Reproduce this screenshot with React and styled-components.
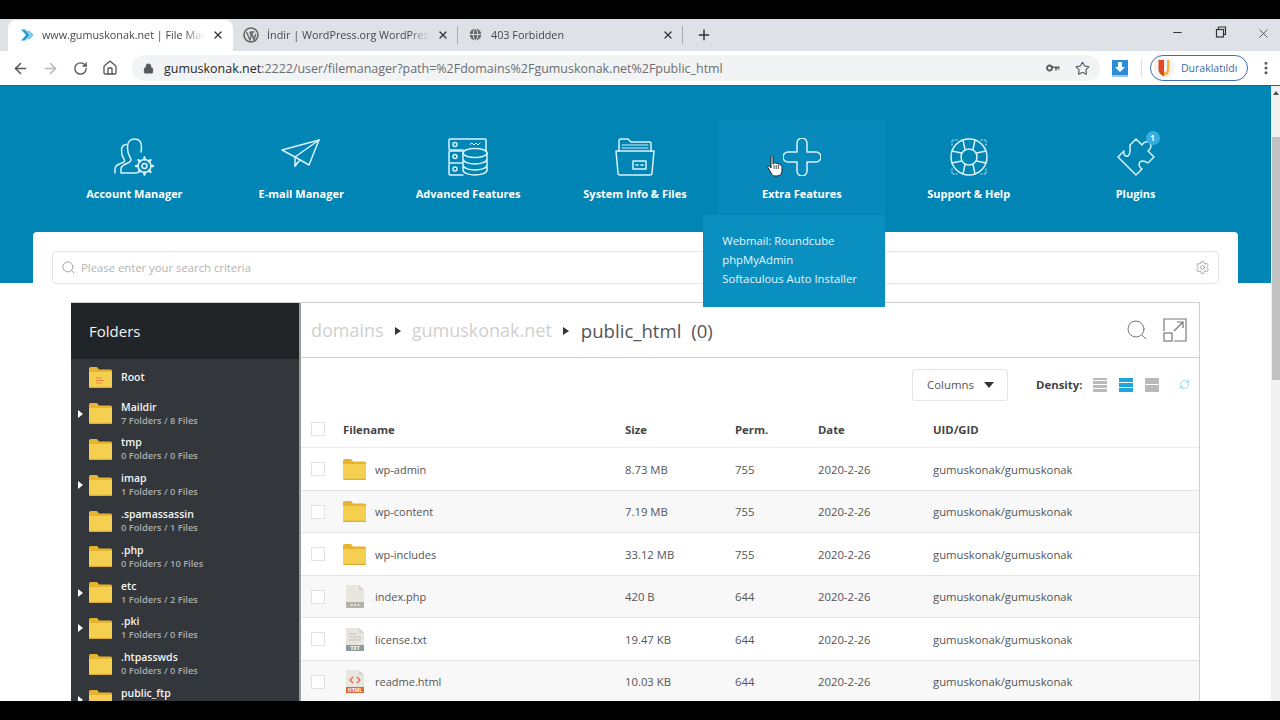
import React from "react";
import styled, { createGlobalStyle } from "styled-components";
import { ArrowLeft, ArrowRight, RotateCw, RefreshCw, Home, Lock, Star, X, Plus, Minus, EllipsisVertical, Settings, Search, Globe } from "lucide-react";

const GlobalStyle = createGlobalStyle`
  html, body { margin: 0; padding: 0; background: #000; }
  * { box-sizing: border-box; }
`;

const Screen = styled.div`
  width: 1280px;
  height: 720px;
  display: flex;
  flex-direction: column;
  overflow: hidden;
  background: #000;
  font-family: "Open Sans", "Liberation Sans", sans-serif;
`;
const Letterbox = styled.div`
  height: ${(p) => p.$h}px;
  flex: none;
  background: #000;
`;
const TabStrip = styled.div`
  height: 32px;
  flex: none;
  background: #dee1e6;
  display: flex;
  align-items: flex-end;
  padding-left: 8px;
  position: relative;
`;
const Tab = styled.div`
  width: 225px;
  height: 31px;
  display: flex;
  align-items: center;
  padding: 0 9px 2px ${(p) => (p.$active ? 12 : 10)}px;
  gap: 8px;
  border-radius: 8px 8px 0 0;
  background: ${(p) => (p.$active ? "#fff" : "transparent")};
  font-size: 10.8px;
  color: #45484c;
  position: relative;
  &::after {
    content: "";
    display: ${(p) => (p.$sep ? "block" : "none")};
    position: absolute;
    right: 0;
    top: 6px;
    height: 18px;
    width: 1px;
    background: #a9adb3;
  }
`;
const TabTitle = styled.span`
  flex: 1;
  white-space: nowrap;
  overflow: hidden;
  -webkit-mask-image: linear-gradient(90deg, #000 88%, transparent);
  mask-image: linear-gradient(90deg, #000 88%, transparent);
`;
const NewTab = styled.div`
  width: 42px;
  height: 31px;
  display: flex;
  align-items: center;
  justify-content: center;
  padding-bottom: 2px;
  color: #333;
`;
const WindowControls = styled.div`
  margin-left: auto;
  margin-right: -5px;
  height: 32px;
  display: flex;
  align-items: flex-start;
  padding-top: 7px;
  color: #333;
`;
const WindowBtn = styled.div`
  width: 43px;
  display: flex;
  justify-content: center;
`;
const Toolbar = styled.div`
  height: 34px;
  flex: none;
  background: #fff;
  display: flex;
  align-items: center;
  padding-left: 5px;
  color: #55585c;
`;
const NavBtn = styled.div`
  width: 30px;
  display: flex;
  justify-content: center;
  color: ${(p) => (p.$off ? "#b4b7bb" : "#55585c")};
`;
const Omnibox = styled.div`
  margin-left: 7px;
  width: 968px;
  height: 26px;
  border-radius: 13px;
  background: #f1f3f4;
  display: flex;
  align-items: center;
  padding: 0 10px 0 11px;
  font-size: 12.47px;
  color: #6b6e72;
`;
const Url = styled.span`
  margin-left: 10px;
  flex: 1;
  white-space: nowrap;
  b { font-weight: 400; color: #26282b; }
`;
const OmniIcons = styled.div`
  display: flex;
  align-items: center;
  gap: 15px;
  color: #5a5d61;
`;
const ToolIcons = styled.div`
  display: flex;
  align-items: center;
  margin-left: 12px;
`;
const ToolSep = styled.div`
  width: 1px;
  height: 20px;
  background: #dcdfe3;
  margin: 0 8px 0 13px;
`;
const Profile = styled.div`
  width: 98px;
  height: 26px;
  border: 1px solid #3d6fb0;
  border-radius: 13px;
  display: flex;
  align-items: center;
  padding-left: 2px;
  gap: 6px;
  font-size: 10.5px;
  color: #3d68a8;
`;
const Dots = styled.div`
  margin-left: 10px;
  color: #55585c;
  display: flex;
`;
const Viewport = styled.div`
  flex: 1;
  min-height: 0;
  display: flex;
  background: #fff;
  border-top: 1px solid #0a6f95;
`;
const Main = styled.div`
  flex: 1;
  min-width: 0;
  overflow: hidden;
  display: flex;
  flex-direction: column;
`;
const Scrollbar = styled.div`
  width: 9px;
  flex: none;
  background: #f1f1f1;
  display: flex;
  flex-direction: column;
  padding: 5px 0 0 1px;
`;
const ScrollArrow = styled.div`
  width: 0;
  height: 0;
  margin: 0 0 42px 1px;
  border-bottom: 4px solid #505050;
  border-left: 3.5px solid transparent;
  border-right: 3.5px solid transparent;
`;
const Thumb = styled.div`
  height: 243px;
  flex: none;
  background: #c1c1c1;
`;
const Hero = styled.div`
  height: 197px;
  flex: none;
  background: #0085b5;
  padding: 34px 52px 0 51px;
`;
const NavGrid = styled.div`
  display: grid;
  grid-template-columns: repeat(7, 1fr);
`;
const NavItem = styled.div`
  height: 95px;
  position: relative;
  display: flex;
  flex-direction: column;
  align-items: center;
  padding-top: 18px;
  color: #fff;
  font-size: 11px;
  font-weight: 700;
  background: ${(p) => (p.$open ? "#0789bb" : "transparent")};
`;
const NavIcon = styled.div`
  height: 42px;
  width: 60px;
  position: relative;
  display: flex;
  justify-content: center;
  color: #d9f3fb;
  margin-bottom: 5.5px;
`;
const Badge = styled.div`
  position: absolute;
  top: -7px;
  right: 6px;
  width: 14px;
  height: 14px;
  border-radius: 50%;
  background: #37aee2;
  color: #fff;
  font-size: 8px;
  line-height: 14px;
  text-align: center;
`;
const Dropdown = styled.div`
  position: absolute;
  top: 95px;
  right: 0;
  width: 182px;
  height: 92px;
  background: #0a8fc1;
  padding: 16px 0 0 19px;
  font-size: 11.3px;
  font-weight: 400;
  line-height: 19px;
  color: #e4f6fc;
  z-index: 3;
  white-space: nowrap;
`;
const Cursor = styled.div`
  position: absolute;
  left: 49px;
  top: 35px;
  z-index: 4;
  display: flex;
`;
const Card = styled.div`
  margin: -51px 33px 0;
  flex: 1;
  background: #fff;
  border-radius: 4px 4px 0 0;
  padding: 19px 19px 0;
  position: relative;
  min-height: 0;
`;
const SearchBar = styled.div`
  height: 33px;
  border: 1px solid #e3e3e3;
  border-radius: 4px;
  display: flex;
  align-items: center;
  padding: 0 8px 1px;
  gap: 5px;
  font-size: 11.3px;
  color: #b3b3b3;
`;
const SearchText = styled.span`
  flex: 1;
`;
const Panel = styled.div`
  margin: 18px 19px 0;
  height: 420px;
  display: flex;
  border-top: 1px solid #cfcfcf;
  border-right: 1px solid #cfcfcf;
  overflow: hidden;
`;
const Sidebar = styled.div`
  width: 230px;
  flex: none;
  background: #33363a;
  border-right: 2px solid #9a9da0;
`;
const SideHead = styled.div`
  height: 56px;
  background: #222528;
  color: #f2f2f2;
  font-size: 15px;
  display: flex;
  align-items: center;
  padding-left: 18px;
`;
const FolderRow = styled.div`
  height: 35.8px;
  position: relative;
  display: flex;
  align-items: center;
  padding: 2px 0 0 18px;
  gap: 9px;
`;
const Caret = styled.div`
  position: absolute;
  left: 7px;
  top: 50%;
  margin-top: -3px;
  width: 0;
  height: 0;
  border-left: 5px solid #fff;
  border-top: 4px solid transparent;
  border-bottom: 4px solid transparent;
`;
const FolderName = styled.div`
  color: #f4f4f4;
  font-size: 10.5px;
  font-weight: 600;
  line-height: 13px;
`;
const FolderInfo = styled.div`
  color: #a9adb0;
  font-size: 9.3px;
  font-weight: 600;
  line-height: 13px;
`;
const Content = styled.div`
  flex: 1;
  min-width: 0;
`;
const Crumbs = styled.div`
  height: 55px;
  border-bottom: 1px solid #cfcfcf;
  display: flex;
  align-items: center;
  padding: 0 12px 0 10px;
  font-size: 18px;
  color: #d0d0d0;
`;
const CrumbArrow = styled.span`
  width: 0;
  height: 0;
  margin: 2px 11px 0 11px;
  border-left: 6px solid #333;
  border-top: 4px solid transparent;
  border-bottom: 4px solid transparent;
`;
const CrumbNow = styled.span`
  color: #555;
  flex: 1;
  font-size: 18.6px;
  word-spacing: 5px;
  margin-left: 1px;
`;
const CrumbIcons = styled.div`
  display: flex;
  gap: 14px;
  color: #777;
`;
const Controls = styled.div`
  height: 53px;
  display: flex;
  align-items: center;
  padding: 0 9px 0 611px;
  font-size: 11.4px;
  color: #555;
`;
const ColumnsBtn = styled.div`
  width: 96px;
  height: 32px;
  border: 1px solid #e6e6e6;
  border-radius: 3px;
  display: flex;
  align-items: center;
  padding-left: 14px;
  gap: 10px;
`;
const DownTri = styled.span`
  width: 0;
  height: 0;
  border-top: 6px solid #333;
  border-left: 5.5px solid transparent;
  border-right: 5.5px solid transparent;
`;
const DensityLabel = styled.span`
  margin-left: 28px;
  font-weight: 700;
  color: #444;
  width: 57px;
`;
const DensityGroup = styled.div`
  display: flex;
  gap: 12px;
  align-items: center;
`;
const DensityBtn = styled.div`
  width: 14px;
  height: 14px;
  display: grid;
  grid-template-rows: repeat(${(p) => p.$n}, 1fr);
  gap: 1px;
  div { background: ${(p) => (p.$on ? "#1ba6dc" : "#b9b9b9")}; }
`;
const Refresh = styled.div`
  margin-left: 20px;
  color: #7cc4e0;
  display: flex;
`;
const Row = styled.div`
  height: ${(p) => (p.$head ? 37 : 42.5)}px;
  display: grid;
  grid-template-columns: 42px 282px 110px 83px 115px 1fr;
  align-items: center;
  padding-top: ${(p) => (p.$head ? 0 : 1)}px;
  font-size: 11.3px;
  font-weight: ${(p) => (p.$head ? 700 : 400)};
  color: ${(p) => (p.$head ? "#444" : "#555")};
  border-bottom: 1px solid ${(p) => (p.$head ? "#ececec" : "#e4e4e4")};
  background: ${(p) => (p.$tint ? "#f8f8f8" : "#fff")};
`;
const Check = styled.div`
  width: 14px;
  height: 14px;
  margin-left: 10px;
  background: #fff;
  border: 1px solid #e2e2e2;
`;
const NameCell = styled.div`
  display: flex;
  align-items: center;
  gap: 9px;
  font-size: 11px;
`;
const IconSlot = styled.div`
  width: 23px;
  display: flex;
  justify-content: center;
`;

const Folder = ({ root }) => (
  <svg width="23" height="21" viewBox="0 0 23 21" style={{ flex: "none" }}>
    <path d="M0 1.5Q0 0 1.5 0H8L10 2.5H21.5Q23 2.5 23 4V7H0Z" fill="#e7b432" />
    <path d="M0 5H23V19.5Q23 21 21.5 21H1.5Q0 21 0 19.5Z" fill="#f4cf50" />
    <path d="M0 19.8H23V19.5Q23 21 21.5 21H1.5Q0 21 0 19.5Z" fill="#dcae35" />
    {root && <path d="M7 11H13M7 13.5H15M7 16H13" stroke="#e88a3a" strokeWidth="1" />}
  </svg>
);

const FileIcon = ({ kind }) => {
  const band = { php: "#b5b2aa", txt: "#8c9c9c", html: "#e2643a" }[kind];
  return (
    <svg width="18" height="23" viewBox="0 0 18 23">
      <path d="M0 0H13L18 5V23H0Z" fill="#e8e6de" />
      <path d="M13 0L18 5H13Z" fill="#d4d2ca" />
      {kind === "txt" && <path d="M3 6H11M3 9H15M3 12H15" stroke="#c2c0b8" />}
      {kind === "html" && <path d="M7 7L4 10L7 13M11 7L14 10L11 13" stroke="#e2643a" strokeWidth="1.2" fill="none" />}
      <rect y="17" width="18" height="6" fill={band} />
      {kind === "php" && <path d="M5 20H6.5M8.3 20H9.8M11.6 20H13.1" stroke="#fff" strokeWidth="1.5" />}
      {kind !== "php" && (
        <text x="9" y="21.7" textAnchor="middle" fontSize="5" fontWeight="700" fill="#fff" fontFamily="Open Sans, sans-serif">
          {kind.toUpperCase()}
        </text>
      )}
    </svg>
  );
};

const line = { fill: "none", stroke: "currentColor", strokeWidth: 1.5, strokeLinejoin: "round", strokeLinecap: "round" };

const AccountIcon = () => (
  <svg width="40" height="38" viewBox="0 0 40 38" {...line}>
    <path d="M1 35V31C1 27 5 26 9 24.5C10.5 24 11 22.5 10 21C8.5 19 7.5 17 7.5 13C7.5 8.5 9.5 6.5 12.5 6.5" />
    <path d="M7 35H23M7 35V31C7 27.5 11 26 15 24.5C17 23.5 17.5 22 16.5 20C14.5 17 13.5 14 13.5 9C13.5 4 16.5 1 20.5 1C25 1 27.5 4 27.5 9C27.5 10.5 27.3 12.5 27 14" />
    <circle cx="30.5" cy="28" r="6.5" />
    <circle cx="30.5" cy="28" r="2.5" />
    <path d="M30.5 19.5V21.5M30.5 34.5V36.5M22 28H24M37 28H39M24.5 22L26 23.5M35 32.5L36.5 34M36.5 22L35 23.5M26 32.5L24.5 34" strokeWidth="2.4" />
  </svg>
);
const MailIcon = () => (
  <svg width="40" height="38" viewBox="0 0 40 38" {...line}>
    <path d="M1 12L38 2L28 27L14 19Z" />
    <path d="M38 2L14 19L14 28L19 22" />
    <path d="M14 28L16 25" />
  </svg>
);
const ServerIcon = () => (
  <svg width="40" height="38" viewBox="0 0 40 38" {...line}>
    <path d="M15 12H2Q1 12 1 11V2Q1 1 2 1H37Q38 1 38 2V13" />
    <path d="M15 13H2Q1 13 1 14V24Q1 25 2 25H14M14 25H2Q1 25 1 26V36Q1 37 2 37H15" />
    <circle cx="7" cy="6.5" r="2" />
    <circle cx="7" cy="18.5" r="2" />
    <circle cx="7" cy="31" r="2" />
    <path d="M22 6.5L24 5L26 7L28 5L30 7L32 5" strokeWidth="1" />
    <ellipse cx="27" cy="15" rx="12" ry="4.5" />
    <path d="M15 15V32C15 35 21 37 27 37C33 37 39 35 39 32V15M15 21C15 24 21 26 27 26C33 26 39 24 39 21M15 27C15 30 21 32 27 32C33 32 39 30 39 27" />
  </svg>
);
const FilesIcon = () => (
  <svg width="40" height="38" viewBox="0 0 40 38" {...line}>
    <path d="M4 13V3Q4 1 6 1H13L16 4H35Q36 4 36 5V13" />
    <path d="M7 10H33M7 7H33" strokeWidth="1" />
    <path d="M1 13H39L37 35Q37 37 35 37H5Q3 37 3 35Z" />
    <rect x="18" y="23" width="13" height="8" />
    <path d="M21 27H23M26 27H28" />
  </svg>
);
const PlusIcon = () => (
  <svg width="38" height="38" viewBox="0 0 38 38" {...line}>
    <path d="M14 5A5 5 0 0 1 24 5V14H33A5 5 0 0 1 33 24H24V33A5 5 0 0 1 14 33V24H5A5 5 0 0 1 5 14H14Z" />
  </svg>
);
const RingIcon = () => (
  <svg width="38" height="38" viewBox="0 0 38 38" {...line}>
    <circle cx="19" cy="19" r="18" />
    <circle cx="19" cy="19" r="8" />
    <path d="M13 2L15 11.5M25 2L23 11.5M13 36L15 26.5M25 36L23 26.5M2 13L11.5 15M2 25L11.5 23M36 13L26.5 15M36 25L26.5 23" />
    <path d="M2 7V2H7M31 2H36V7M2 31V36H7M31 36H36V31" strokeDasharray="1 2" strokeWidth="1" />
  </svg>
);
const PuzzleIcon = () => (
  <svg width="38" height="38" viewBox="0 0 38 38" {...line}>
    <path d="M1 19L7 13C6 17 9 19 11 18C14 16 13 12 13 7L19 1L25 7C27 3 31 3 33 5C35 8 33 12 31 13L37 19L31 25C28 23 25 22 23 24C21 27 23 30 25 31L19 37Z" />
  </svg>
);
const HandCursor = () => (
  <svg width="16" height="22" viewBox="0 0 16 22">
    <path d="M4 1.5C4 .5 6 .5 6 1.5V9L7 8.5C7.5 7.5 9 7.5 9.2 8.7C9.8 8 11 8 11.3 9.2C12 8.7 13.3 9 13.5 10.2C14.5 10.2 15 11 15 12V16C15 19 13 21 10 21H8C6 21 5 20 4 18L1 12.5C.5 11.2 2 10.3 3 11.5L4 13Z" fill="#fff" stroke="#222" strokeWidth="1" />
    <path d="M7 10V14M9.2 10V14M11.3 10V14" stroke="#222" strokeWidth=".8" />
  </svg>
);
const KeyGlyph = () => (
  <svg width="14" height="8" viewBox="0 0 14 8" fill="none" stroke="#5a5d61">
    <circle cx="3.5" cy="4" r="2.5" strokeWidth="1.8" />
    <path d="M6 3.2H13.5M10 3.2V6.5M12.5 3.2V5.5" strokeWidth="1.6" />
  </svg>
);

const NAV = [
  { label: "Account Manager", Icon: AccountIcon },
  { label: "E-mail Manager", Icon: MailIcon },
  { label: "Advanced Features", Icon: ServerIcon },
  { label: "System Info & Files", Icon: FilesIcon },
  { label: "Extra Features", Icon: PlusIcon, open: true },
  { label: "Support & Help", Icon: RingIcon },
  { label: "Plugins", Icon: PuzzleIcon, badge: 1 },
];

const FOLDERS = [
  { name: "Root", root: true },
  { name: "Maildir", info: "7 Folders / 8 Files", caret: true },
  { name: "tmp", info: "0 Folders / 0 Files" },
  { name: "imap", info: "1 Folders / 0 Files", caret: true },
  { name: ".spamassassin", info: "0 Folders / 1 Files" },
  { name: ".php", info: "0 Folders / 10 Files" },
  { name: "etc", info: "1 Folders / 2 Files", caret: true },
  { name: ".pki", info: "1 Folders / 0 Files", caret: true },
  { name: ".htpasswds", info: "0 Folders / 0 Files" },
  { name: "public_ftp", info: "0 Folders / 0 Files", caret: true },
];

const FILES = [
  { name: "wp-admin", size: "8.73 MB", perm: "755" },
  { name: "wp-content", size: "7.19 MB", perm: "755" },
  { name: "wp-includes", size: "33.12 MB", perm: "755" },
  { name: "index.php", size: "420 B", perm: "644", kind: "php" },
  { name: "license.txt", size: "19.47 KB", perm: "644", kind: "txt" },
  { name: "readme.html", size: "10.03 KB", perm: "644", kind: "html" },
];

const App = () => (
  <Screen>
    <GlobalStyle />
    <Letterbox $h={19} />
    <TabStrip>
      <Tab $active>
        <svg width="14" height="14" viewBox="0 0 14 14">
          <path d="M1 1.5L6 7L1 12.5H5L10 7L5 1.5Z" fill="#2a9fd0" />
          <path d="M7 3L11 7L7 11L9 11.5L13.5 7L9 2.5Z" fill="#59c3e8" />
        </svg>
        <TabTitle>www.gumuskonak.net | File Manager</TabTitle>
        <X size={12} strokeWidth={2.6} color="#333" />
      </Tab>
      <Tab $sep>
        <svg width="16" height="16" viewBox="0 0 16 16">
          <circle cx="8" cy="8" r="7" fill="none" stroke="#666" strokeWidth="1.6" />
          <path d="M3.5 5L7 13L8.3 9L6.8 5M7 5H11.5M8.5 5L11 13L12.8 7" fill="none" stroke="#666" strokeWidth="1.3" />
        </svg>
        <TabTitle>İndir | WordPress.org WordPress</TabTitle>
        <X size={12} strokeWidth={2.6} color="#333" />
      </Tab>
      <Tab $sep>
        <Globe size={15} fill="#666" color="#dee1e6" strokeWidth={1.5} />
        <TabTitle>403 Forbidden</TabTitle>
        <X size={12} strokeWidth={2.6} color="#333" />
      </Tab>
      <NewTab>
        <Plus size={16} strokeWidth={2.2} />
      </NewTab>
      <WindowControls>
        <WindowBtn><Minus size={13} /></WindowBtn>
        <WindowBtn>
          <svg width="12" height="12" viewBox="0 0 12 12" fill="none" stroke="#333" strokeWidth="1.2">
            <rect x="1.5" y="3.5" width="7" height="7.5" />
            <path d="M3.5 3.5V1H10.5V8.5H8.5" />
          </svg>
        </WindowBtn>
        <WindowBtn><X size={15} strokeWidth={1.2} /></WindowBtn>
      </WindowControls>
    </TabStrip>
    <Toolbar>
      <NavBtn><ArrowLeft size={17} strokeWidth={2.2} /></NavBtn>
      <NavBtn $off><ArrowRight size={17} strokeWidth={2.2} /></NavBtn>
      <NavBtn><RotateCw size={15} strokeWidth={2.2} /></NavBtn>
      <NavBtn><Home size={16} strokeWidth={2} /></NavBtn>
      <Omnibox>
        <Lock size={11} fill="#55585c" color="#55585c" />
        <Url><b>gumuskonak.net</b>:2222/user/filemanager?path=%2Fdomains%2Fgumuskonak.net%2Fpublic_html</Url>
        <OmniIcons>
          <KeyGlyph />
          <Star size={15} strokeWidth={1.8} />
        </OmniIcons>
      </Omnibox>
      <ToolIcons>
        <svg width="16" height="17" viewBox="0 0 16 17">
          <rect width="16" height="15" fill="#2c8fd6" />
          <path d="M6 2H10V7H13L8 12L3 7H6Z" fill="#fff" />
          <rect y="15" width="16" height="2" fill="#9dc8e8" />
        </svg>
        <ToolSep />
        <Profile>
          <svg width="22" height="22" viewBox="0 0 22 22">
            <circle cx="11" cy="11" r="10.5" fill="#f3f3f3" />
            <path d="M5.5 3V12C5.5 16 8 18.5 11 19V3Z" fill="#e2481f" />
            <path d="M11 19C14 18.5 16.5 16 16.5 12V3H14V12C14 14 13 15 11 15.5Z" fill="#f4b63c" />
          </svg>
          Duraklatıldı
        </Profile>
        <Dots><EllipsisVertical size={16} strokeWidth={2.6} /></Dots>
      </ToolIcons>
    </Toolbar>
    <Viewport>
      <Main>
        <Hero>
          <NavGrid>
            {NAV.map(({ label, Icon, open, badge }) => (
              <NavItem key={label} $open={open}>
                <NavIcon>
                  <Icon />
                  {badge && <Badge>{badge}</Badge>}
                </NavIcon>
                {label}
                {open && (
                  <>
                    <Cursor><HandCursor /></Cursor>
                    <Dropdown>
                      Webmail: Roundcube<br />
                      phpMyAdmin<br />
                      Softaculous Auto Installer
                    </Dropdown>
                  </>
                )}
              </NavItem>
            ))}
          </NavGrid>
        </Hero>
        <Card>
          <SearchBar>
            <Search size={15} strokeWidth={1.4} color="#999" />
            <SearchText>Please enter your search criteria</SearchText>
            <Settings size={15} strokeWidth={1.2} color="#888" />
          </SearchBar>
          <Panel>
            <Sidebar>
              <SideHead>Folders</SideHead>
              {FOLDERS.map((f) => (
                <FolderRow key={f.name}>
                  {f.caret && <Caret />}
                  <Folder root={f.root} />
                  <div>
                    <FolderName>{f.name}</FolderName>
                    {f.info && <FolderInfo>{f.info}</FolderInfo>}
                  </div>
                </FolderRow>
              ))}
            </Sidebar>
            <Content>
              <Crumbs>
                domains<CrumbArrow />gumuskonak.net<CrumbArrow />
                <CrumbNow>public_html (0)</CrumbNow>
                <CrumbIcons>
                  <Search size={24} strokeWidth={1} />
                  <svg width="24" height="24" viewBox="0 0 24 24" fill="none" stroke="#777" strokeWidth="1.2">
                    <path d="M1 13V1H23V23H11" />
                    <rect x="1" y="15" width="8" height="8" />
                    <path d="M11 13L20 4M14 4H20V10" />
                  </svg>
                </CrumbIcons>
              </Crumbs>
              <Controls>
                <ColumnsBtn>Columns <DownTri /></ColumnsBtn>
                <DensityLabel>Density:</DensityLabel>
                <DensityGroup>
                  <DensityBtn $n={4}><div /><div /><div /><div /></DensityBtn>
                  <DensityBtn $n={3} $on><div /><div /><div /></DensityBtn>
                  <DensityBtn $n={2}><div /><div /></DensityBtn>
                </DensityGroup>
                <Refresh><RefreshCw size={11} strokeWidth={1.5} /></Refresh>
              </Controls>
              <Row $head>
                <Check />
                <span>Filename</span>
                <span>Size</span>
                <span>Perm.</span>
                <span>Date</span>
                <span>UID/GID</span>
              </Row>
              {FILES.map((f, i) => (
                <Row key={f.name} $tint={i % 2 === 1}>
                  <Check />
                  <NameCell>
                    <IconSlot>{f.kind ? <FileIcon kind={f.kind} /> : <Folder />}</IconSlot>
                    {f.name}
                  </NameCell>
                  <span>{f.size}</span>
                  <span>{f.perm}</span>
                  <span>2020-2-26</span>
                  <span>gumuskonak/gumuskonak</span>
                </Row>
              ))}
            </Content>
          </Panel>
        </Card>
      </Main>
      <Scrollbar><ScrollArrow /><Thumb /></Scrollbar>
    </Viewport>
    <Letterbox $h={19} />
  </Screen>
);

export default App;
